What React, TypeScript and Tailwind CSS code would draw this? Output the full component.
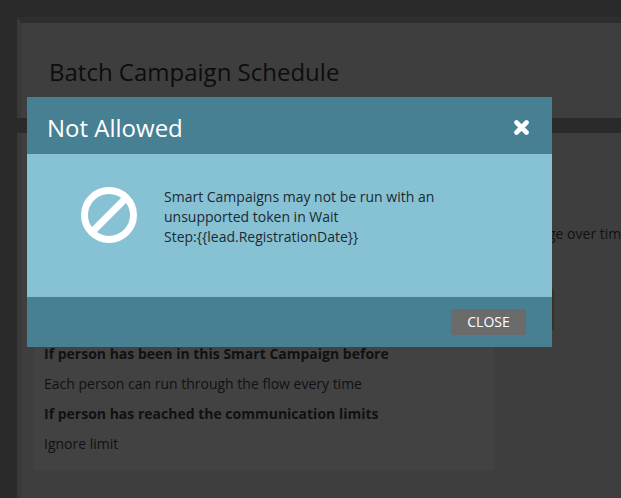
const font = { fontFamily: '"Open Sans", sans-serif' };

function NotAllowedModal() {
  return (
    <div className="absolute left-[27px] top-[97px] flex h-[250px] w-[525px] flex-col">
      <div className="flex h-[57px] items-center justify-between bg-[#488093] pl-[20px] pr-[23px]">
        <h2 className="mt-[4px] text-[24px] leading-[36px] text-white">Not Allowed</h2>
        <svg viewBox="0 0 15 15" className="mt-[4px] h-[15px] w-[15px]" aria-hidden="true">
          <path d="M2.5 2.5 12.5 12.5M12.5 2.5 2.5 12.5" stroke="#fff" strokeWidth="4.6" strokeLinecap="round" />
        </svg>
      </div>
      <div className="flex h-[143px] bg-[#87c1d4] pl-[54px] pt-[33px]">
        <svg viewBox="0 0 56 56" className="h-[56px] w-[56px] shrink-0" aria-hidden="true">
          <circle cx="28" cy="28" r="24.5" fill="none" stroke="#fff" strokeWidth="7" />
          <line x1="11" y1="45" x2="45" y2="11" stroke="#fff" strokeWidth="7" />
        </svg>
        <p className="ml-[27px] w-[290px] text-[14px] leading-[20px] text-[#1c2a30]">
          Smart Campaigns may not be run with an unsupported token in Wait
          <br />
          Step:{"{{lead.RegistrationDate}}"}
        </p>
      </div>
      <div className="flex h-[50px] items-start justify-end bg-[#488093] pr-[26px] pt-[12px]">
        <button className="h-[26px] w-[75px] bg-[#6b6b6b] text-[14px] leading-[26px] text-white">CLOSE</button>
      </div>
    </div>
  );
}

export default function App() {
  return (
    <div className="relative h-[498px] w-[621px] overflow-hidden bg-[#2a2a2b]" style={font}>
      <div className="ml-[17px] flex h-full flex-col pt-[17px]">
        <div className="h-[101px] border-t-[6px] border-l-[4px] border-t-[#2e2e2f] border-l-[#39393a] bg-[#3e3e3f] pl-[28px] pt-[31px]">
          <h1 className="text-[24px] leading-[36px] text-[#0d0d0d]">Batch Campaign Schedule</h1>
        </div>
        <div className="h-[15px] bg-[#2a2a2b]" />
        <div className="flex-1 border-l-[4px] border-l-[#39393a] bg-[#3e3e3f] pl-[13px] pt-[1px]">
          <div className="h-[336px] w-[460px] bg-[#424243] pl-[10px] text-[14px] leading-[30px] text-[#111]">
            <p className="pt-[85px] pl-[504px] whitespace-nowrap">ge over time</p>
            <div className="mt-[86px] pt-[4px]">
              <p className="font-bold">If person has been in this Smart Campaign before</p>
              <p>Each person can run through the flow every time</p>
              <p className="font-bold">If person has reached the communication limits</p>
              <p>Ignore limit</p>
            </div>
          </div>
        </div>
      </div>
      <div className="absolute left-[552px] top-[289px] h-[41px] w-[2px] bg-[#3a3022]" />
      <NotAllowedModal />
    </div>
  );
}
